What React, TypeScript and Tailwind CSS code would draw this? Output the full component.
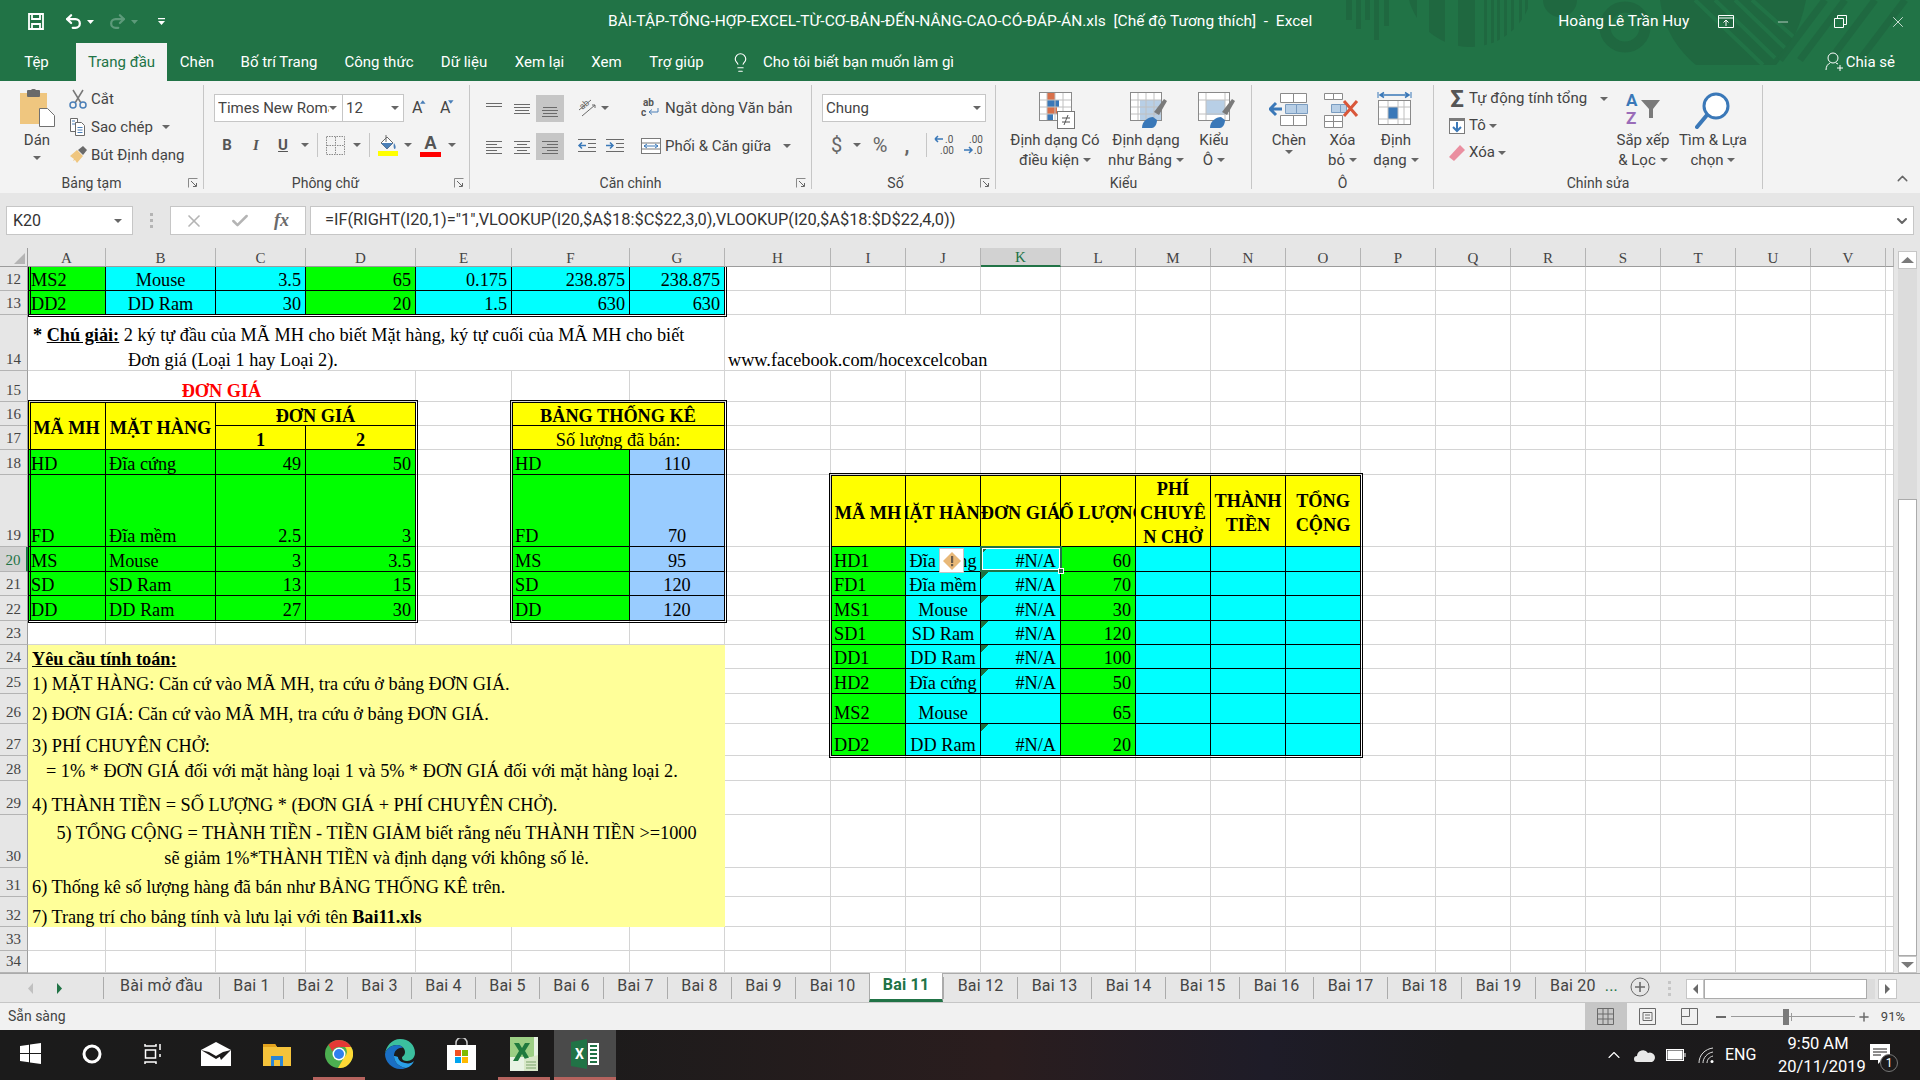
import React from 'react';
import { Redo2, Undo2, Lightbulb, X, Check, Minus, Plus, ChevronUp, ChevronDown } from 'lucide-react';

type Cell = {
  t?: React.ReactNode;
  a?: 'l' | 'c' | 'r';
  f?: 'g' | 'c' | 'y' | 'b' | 'ly' | 't';
  b?: boolean;
  cs?: number;
  rs?: number;
  k?: boolean;
  none?: boolean;
  red?: boolean;
};

const fillCls = {
  g: 'bg-[#00ff00]',
  c: 'bg-[#00ffff]',
  y: 'bg-[#ffff00]',
  b: 'bg-[#99ccff]',
  ly: 'bg-[#ffff99]',
  t: 'bg-[linear-gradient(135deg,#1d6f3f_5px,#00ffff_5px)]',
};
const alignCls = {
  l: 'justify-start pl-[3px]',
  c: 'justify-center text-center',
  r: 'justify-end pr-[4px]',
};

const columns = ['A', 'B', 'C', 'D', 'E', 'F', 'G', 'H', 'I', 'J', 'K', 'L', 'M', 'N', 'O', 'P', 'Q', 'R', 'S', 'T', 'U', 'V', ''];
const rowNums = Array.from({ length: 23 }, (_, i) => i + 12);

const g = (t: React.ReactNode, a: 'l' | 'c' | 'r' = 'l'): Cell => ({ t, a, f: 'g', k: true });
const c = (t?: React.ReactNode, a: 'l' | 'c' | 'r' = 'r'): Cell => ({ t, a, f: 'c', k: true });
const y = (t: React.ReactNode, extra: Partial<Cell> = {}): Cell => ({ t, a: 'c', f: 'y', k: true, b: true, ...extra });
const note = (t: React.ReactNode): Cell => ({ t: <span className="pl-[1px]">{t}</span>, a: 'l', f: 'ly', cs: 7, none: true });

const sheet: Record<string, Cell> = {
  A12: g('MS2'), B12: c('Mouse', 'c'), C12: c('3.5'), D12: g('65', 'r'), E12: c('0.175'), F12: c('238.875'), G12: c('238.875'),
  A13: g('DD2'), B13: c('DD Ram', 'c'), C13: c('30'), D13: g('20', 'r'), E13: c('1.5'), F13: c('630'), G13: c('630'),
  A14: {
    cs: 7,
    t: (
      <div className="-mb-[2px] pl-[2px] leading-[24.500px]">
        <div><b>* <u>Chú giải:</u></b> 2 ký tự đầu của MÃ MH cho biết Mặt hàng, ký tự cuối của MÃ MH cho biết</div>
        <div className="pl-[95px]">Đơn giá (Loại 1 hay Loại 2).</div>
      </div>
    ),
  },
  H14: { t: 'www.facebook.com/hocexcelcoban', cs: 4 },
  A15: { t: 'ĐƠN GIÁ', cs: 4, a: 'c', b: true, red: true },
  A16: y('MÃ MH', { rs: 2 }), B16: y('MẶT HÀNG', { rs: 2 }), C16: y('ĐƠN GIÁ', { cs: 2 }), C17: y('1'), D17: y('2'),
  F16: y('BẢNG THỐNG KÊ', { cs: 2 }), F17: y('Số lượng đã bán:', { cs: 2, b: false }),
  A18: g('HD'), B18: g('Đĩa cứng'), C18: g('49', 'r'), D18: g('50', 'r'), F18: g('HD'), G18: { t: '110', a: 'c', f: 'b', k: true },
  A19: g('FD'), B19: g('Đĩa mềm'), C19: g('2.5', 'r'), D19: g('3', 'r'), F19: g('FD'), G19: { t: '70', a: 'c', f: 'b', k: true },
  A20: g('MS'), B20: g('Mouse'), C20: g('3', 'r'), D20: g('3.5', 'r'), F20: g('MS'), G20: { t: '95', a: 'c', f: 'b', k: true },
  A21: g('SD'), B21: g('SD Ram'), C21: g('13', 'r'), D21: g('15', 'r'), F21: g('SD'), G21: { t: '120', a: 'c', f: 'b', k: true },
  A22: g('DD'), B22: g('DD Ram'), C22: g('27', 'r'), D22: g('30', 'r'), F22: g('DD'), G22: { t: '120', a: 'c', f: 'b', k: true },
  I19: y('MÃ MH'), J19: y('MẶT HÀNG'), K19: y('ĐƠN GIÁ'), L19: y('SỐ LƯỢNG'),
  M19: y(<div className="leading-[24px]">PHÍ<br />CHUYÊ<br />N CHỞ</div>), N19: y(<div className="leading-[24px]">THÀNH<br />TIỀN</div>), O19: y(<div className="leading-[24px]">TỔNG<br />CỘNG</div>),
  A24: note(<b><u>Yêu cầu tính toán:</u></b>),
  A25: note('1) MẶT HÀNG: Căn cứ vào MÃ MH, tra cứu ở bảng ĐƠN GIÁ.'),
  A26: note('2) ĐƠN GIÁ: Căn cứ vào MÃ MH, tra cứu ở bảng ĐƠN GIÁ.'),
  A27: note('3) PHÍ CHUYÊN CHỞ:'),
  A28: note(<span className="pl-[14px]">= 1% * ĐƠN GIÁ đối với mặt hàng loại 1 và 5% * ĐƠN GIÁ đối với mặt hàng loại 2.</span>),
  A29: note('4) THÀNH TIỀN = SỐ LƯỢNG * (ĐƠN GIÁ + PHÍ CHUYÊN CHỞ).'),
  A30: {
    t: (
      <div className="-mb-[2px] text-center leading-[24.500px]">
        <div>5) TỔNG CỘNG = THÀNH TIỀN - TIỀN GIẢM biết rằng nếu THÀNH TIỀN &gt;=1000</div>
        <div>sẽ giảm 1%*THÀNH TIỀN và định dạng với không số lẻ.</div>
      </div>
    ),
    a: 'c',
    f: 'ly',
    cs: 7,
    none: true,
  },
  A31: note('6) Thống kê số lượng hàng đã bán như BẢNG THỐNG KÊ trên.'),
  A32: note(<>7) Trang trí cho bảng tính và lưu lại với tên <b>Bai11.xls</b></>),
};

const rightRows: [number, string, string, string, string][] = [
  [20, 'HD1', 'Đĩa cứng', '#N/A', '60'],
  [21, 'FD1', 'Đĩa mềm', '#N/A', '70'],
  [22, 'MS1', 'Mouse', '#N/A', '30'],
  [23, 'SD1', 'SD Ram', '#N/A', '120'],
  [24, 'DD1', 'DD Ram', '#N/A', '100'],
  [25, 'HD2', 'Đĩa cứng', '#N/A', '50'],
  [26, 'MS2', 'Mouse', '', '65'],
  [27, 'DD2', 'DD Ram', '#N/A', '20'],
];
rightRows.forEach(([r, id, name, price, qty]) => {
  sheet[`I${r}`] = g(id);
  sheet[`J${r}`] = c(name, 'c');
  sheet[`K${r}`] = { t: price, a: 'r', f: price ? 't' : 'c', k: true };
  sheet[`L${r}`] = g(qty, 'r');
  sheet[`M${r}`] = c();
  sheet[`N${r}`] = c();
  sheet[`O${r}`] = c();
});

const place = (col: number, row: number, cs = 1, rs = 1) => ({
  gridColumn: `${col + 2} / span ${cs}`,
  gridRow: `${row - 10} / span ${rs}`,
});

function Sheet() {
  const covered = new Set<string>();
  const nodes: React.ReactNode[] = [];

  columns.forEach((name, i) => {
    const active = name === 'K';
    nodes.push(
      <div
        key={`h${i}`}
        style={{ gridColumn: `${i + 2}`, gridRow: '1' }}
        className={`flex items-center justify-center border-r border-r-[#b4b4b4] border-b pt-[2px] text-[15px] leading-none ${active ? 'bg-[#d2d2d2] border-b-[#217346] border-b-2 text-[#217346]' : 'bg-[#e6e6e6] border-b-[#9c9c9c] text-[#444]'}`}
      >
        {name}
      </div>
    );
  });

  rowNums.forEach(r => {
    const active = r === 20;
    nodes.push(
      <div
        key={`r${r}`}
        style={{ gridColumn: '1', gridRow: `${r - 10}` }}
        className={`flex items-end justify-center border-b border-b-[#b4b4b4] border-r text-[15px] leading-[21px] ${active ? 'bg-[#d2d2d2] border-r-[#217346] border-r-2 text-[#217346]' : 'bg-[#e6e6e6] border-r-[#9c9c9c] text-[#444]'}`}
      >
        {r}
      </div>
    );
    columns.forEach((name, i) => {
      const id = `${name}${r}`;
      if (covered.has(id)) return;
      const cell = sheet[id] || {};
      const cs = cell.cs || 1;
      const rs = cell.rs || 1;
      for (let a = 0; a < cs; a++) {
        for (let b = 0; b < rs; b++) covered.add(`${columns[i + a]}${r + b}`);
      }
      const isHeader = cell.f === 'y';
      nodes.push(
        <div
          key={id}
          style={place(i, r, cs, rs)}
          className={[
            'flex overflow-hidden whitespace-nowrap',
            isHeader ? 'items-center pt-[4px] leading-[20px]' : 'items-end leading-[20px]',
            cell.b ? 'font-bold' : '',
            cell.red ? 'text-[#ff0000]' : 'text-black',
            cell.f ? fillCls[cell.f] : '',
            alignCls[cell.a || 'l'],
            cell.none ? '' : 'border-r border-b',
            cell.k ? 'border-black' : 'border-[#d4d4d4]',
          ].join(' ')}
        >
          {cell.t}
        </div>
      );
    });
  });

  return (
    <div className="grid w-[1894px] shrink-0 grid-cols-[28px_78px_110px_90px_110px_96px_118px_95px_106px_75px_75px_80px_75px_75px_75px_75px_75px_75px_75px_75px_75px_75px_75px_8px] grid-rows-[19px_24px_24px_56px_31px_24px_24px_25px_72px_25px_24px_25px_24px_24px_25px_30px_32px_25px_34px_53px_29px_30px_24px_22px] bg-white font-['Liberation_Serif',serif] text-[18.250px]">
      <div style={{ gridColumn: '1', gridRow: '1' }} className="flex items-end justify-end border-r border-b border-[#9c9c9c] bg-[#e6e6e6] p-[2px]">
        <div className="h-0 w-0 border-l-[11px] border-t-[11px] border-l-transparent border-t-transparent border-b-0 border-r-[11px] border-r-[#b4b4b4]" />
      </div>
      {nodes}
      <div style={place(0, 12, 7, 2)} className="pointer-events-none -mb-[2px] -mr-[2px] border-x-[3px] border-b-[3px] border-double border-black" />
      <div style={place(0, 16, 4, 7)} className="pointer-events-none -mb-[2px] -mr-[2px] -mt-[2px] border-[3px] border-double border-black" />
      <div style={place(5, 16, 2, 7)} className="pointer-events-none -m-[2px] border-[3px] border-double border-black" />
      <div style={place(8, 19, 7, 9)} className="pointer-events-none -m-[2px] border-[3px] border-double border-black" />
      <div style={place(10, 20)} className="pointer-events-none relative -mx-px -mt-px border-2 border-[#217346]">
        <div className="h-full w-full border border-white" />
        <div className="absolute -bottom-[4px] -right-[4px] h-[6px] w-[6px] border border-white bg-[#217346]" />
      </div>
      <div style={place(9, 20)} className="ml-[33px] mt-[1px] flex h-[25px] w-[25px] items-center justify-center self-start border border-[#c4c4c4] bg-white">
        <svg width="20" height="20" viewBox="0 0 20 20">
          <path d="M10 1l9 9-9 9-9-9z" fill="#e8b878" />
          <rect x="9" y="5" width="2.2" height="7" fill="#6a5a4a" />
          <rect x="9" y="13" width="2.2" height="2.2" fill="#6a5a4a" />
        </svg>
      </div>
    </div>
  );
}

const Arrow = ({ className = '' }: { className?: string }) => (
  <svg width="8" height="4" viewBox="0 0 8 4" className={`shrink-0 ${className}`}><path d="M0 0h8L4 4z" fill="#666" /></svg>
);

const Launcher = () => (
  <svg width="10" height="10" viewBox="0 0 10 10" className="absolute bottom-[5px] right-[5px]" fill="none" stroke="#8a8a8a">
    <path d="M.5 9.500v-9h9" />
    <path d="M3 3l5 5M5 8.500h3.500V5" stroke="#666" />
  </svg>
);

function Group({ w, label, labelCls = '', launcher, children }: { w: string; label: string; labelCls?: string; launcher?: boolean; children: React.ReactNode }) {
  return (
    <div className={`flex shrink-0 flex-col ${w}`}>
      <div className="flex min-h-0 flex-1">{children}</div>
      <div className={`relative h-[20px] text-center text-[14px] leading-[20px] text-[#444] ${labelCls}`}>
        {label}
        {launcher && <Launcher />}
      </div>
    </div>
  );
}

const GroupSep = () => <div className="my-[4px] w-px shrink-0 bg-[#c6c6c6]" />;

const AlignIcon = ({ lines }: { lines: [number, number, number][] }) => (
  <svg width="20" height="20" viewBox="0 0 20 20" stroke="#6a6a6a" strokeWidth="1">
    {lines.map(([x1, x2, ly], i) => <path key={i} d={`M${x1} ${ly}.5H${x2}`} />)}
  </svg>
);

const IconBox = ({ hot, children }: { hot?: boolean; children: React.ReactNode }) => (
  <div className={`flex h-[27px] w-[28px] shrink-0 items-center justify-center ${hot ? 'bg-[#c6c6c6]' : ''}`}>{children}</div>
);

const SheetGridIcon = ({ className = '', children }: { className?: string; children: React.ReactNode }) => (
  <svg width="40" height="38" viewBox="0 0 40 38" fill="none" className={className}>{children}</svg>
);

function BigButton({ w, lines, icon }: { w: string; lines: React.ReactNode[]; icon: React.ReactNode }) {
  return (
    <div className={`flex shrink-0 flex-col items-center pt-[10px] ${w}`}>
      <div className="flex h-[38px] items-center justify-center">{icon}</div>
      <div className="mt-[1px] text-center text-[15px] leading-[20px] text-[#444]">
        {lines.map((l, i) => <div key={i} className="flex items-center justify-center gap-[4px] whitespace-nowrap">{l}</div>)}
      </div>
    </div>
  );
}

function Ribbon() {
  const top = <AlignIcon lines={[[2, 18, 5], [2, 18, 8]]} />;
  const mid = <AlignIcon lines={[[2, 18, 6], [2, 18, 9], [3, 17, 12], [2, 18, 15]]} />;
  const bottom = <AlignIcon lines={[[3, 17, 9], [2, 18, 12], [3, 17, 15], [2, 18, 18]]} />;
  const left = <AlignIcon lines={[[2, 18, 5], [2, 13, 8], [2, 18, 11], [2, 13, 14], [2, 18, 17]]} />;
  const center = <AlignIcon lines={[[2, 18, 5], [5, 15, 8], [2, 18, 11], [5, 15, 14], [2, 18, 17]]} />;
  const right = <AlignIcon lines={[[2, 18, 5], [7, 18, 8], [2, 18, 11], [7, 18, 14], [2, 18, 17]]} />;

  return (
    <div className="flex h-[112px] bg-[#f3f3f3] text-[15px] text-[#444]">
      <Group w="w-[203px]" label="Bảng tạm" labelCls="pr-[20px]" launcher>
        <div className="ml-[5px] flex w-[64px] flex-col items-center pt-[8px]">
          <svg width="35" height="38" viewBox="0 0 35 38">
            <rect x="0" y="4" width="27" height="31" fill="#efc67f" />
            <rect x="7" y="1" width="13" height="7" rx="1" fill="#6a6a6a" />
            <rect x="11" y="0" width="5" height="4" rx="1.500" fill="#6a6a6a" />
            <path d="M19.500 19.500h8l7 7v11h-15z" fill="#fff" stroke="#707070" />
          </svg>
          <div className="mt-[2px] leading-[22px]">Dán</div>
          <Arrow className="mt-[5px]" />
        </div>
        <div className="flex flex-col pt-[4px]">
          <div className="flex h-[28px] items-center gap-[4px]">
            <svg width="18" height="20" viewBox="0 0 18 20" fill="none">
              <path d="M4 1l8 13M14 1L6 14" stroke="#777" strokeWidth="1.500" />
              <circle cx="4" cy="16" r="3" stroke="#4a7fb8" strokeWidth="1.500" />
              <circle cx="14" cy="16" r="3" stroke="#4a7fb8" strokeWidth="1.500" />
            </svg>
            Cắt
          </div>
          <div className="flex h-[28px] items-center gap-[4px]">
            <svg width="18" height="20" viewBox="0 0 18 20" fill="#fff" stroke="#6a6a6a">
              <path d="M1.500 1.500h7v13h-7z" />
              <path d="M6.500 5.500h6l3 3v10h-9z" />
              <path d="M3 4h3M3 7h3M8.500 10.500h5M8.500 13h5M8.500 15.500h5" stroke="#4a7fb8" />
            </svg>
            Sao chép
            <Arrow className="ml-[5px]" />
          </div>
          <div className="flex h-[28px] items-center gap-[4px]">
            <svg width="18" height="18" viewBox="0 0 18 18">
              <path d="M1 10l7-6 6 6-6 7-2-3-2 1 1-2z" fill="#efc67f" />
              <path d="M9 4l5-4 4 4-4 5z" fill="#6a6a6a" />
            </svg>
            Bút Định dạng
          </div>
        </div>
      </Group>
      <GroupSep />

      <Group w="w-[265px]" label="Phông chữ" labelCls="pr-[22px]" launcher>
        <div className="flex flex-col pt-[13px]">
          <div className="ml-[10px] flex h-[28px] items-center">
            <div className="flex h-full w-[129px] items-center justify-between overflow-hidden border border-[#c6c6c6] bg-white pl-[3px] pr-[5px] text-[15px]">
              <span className="w-[112px] overflow-hidden whitespace-nowrap">Times New Roman</span>
              <Arrow />
            </div>
            <div className="flex h-full w-[61px] items-center justify-between border border-l-0 border-[#c6c6c6] bg-white pl-[3px] pr-[4px]">
              12 <Arrow />
            </div>
            <div className="ml-[8px] flex w-[14px] items-start text-[16px] leading-none">A<svg width="6" height="4" viewBox="0 0 6 4" className="-ml-[2px]"><path d="M0 4L3 0l3 4z" fill="#4a7fb8" /></svg></div>
            <div className="ml-[14px] flex w-[14px] items-start text-[16px] leading-none">A<svg width="6" height="4" viewBox="0 0 6 4" className="-ml-[2px]"><path d="M0 0l3 4 3-4z" fill="#4a7fb8" /></svg></div>
          </div>
          <div className="mt-[11px] flex h-[24px] items-center pl-[14px]">
            <span className="w-[18px] text-center font-bold text-[#555]">B</span>
            <span className="ml-[10px] w-[20px] text-center font-['Liberation_Serif',serif] font-bold italic text-[#555]">I</span>
            <span className="ml-[7px] w-[20px] text-center font-bold text-[#555] underline">U</span>
            <Arrow className="ml-[8px]" />
            <div className="ml-[8px] h-[24px] w-px bg-[#c6c6c6]" />
            <svg width="19" height="19" viewBox="0 0 19 19" className="ml-[8px]" fill="none" stroke="#8a8a8a" strokeDasharray="1.500 1">
              <rect x=".5" y=".5" width="18" height="18" />
              <path d="M9.500 1v17M1 9.500h17" />
            </svg>
            <Arrow className="ml-[8px]" />
            <div className="ml-[8px] h-[24px] w-px bg-[#c6c6c6]" />
            <svg width="20" height="22" viewBox="0 0 20 22" className="ml-[8px]">
              <path d="M3 9l6-6 6 6-6 6z" fill="#fff" stroke="#6a6a6a" />
              <path d="M8 1v7" stroke="#6a6a6a" />
              <path d="M3 9h12l-6 6z" fill="#4a7fb8" />
              <path d="M16 9c2 3 2 5 1 6-1 0-2-2-1-6z" fill="#4a7fb8" />
              <rect x="0" y="17" width="20" height="5" fill="#ffff00" />
            </svg>
            <Arrow className="ml-[6px]" />
            <div className="ml-[8px] flex w-[21px] flex-col items-center font-['Liberation_Sans',sans-serif] text-[18px] font-bold leading-[18px] text-[#555]">
              A
              <div className="h-[5px] w-full bg-[#ff0000]" />
            </div>
            <Arrow className="ml-[7px]" />
          </div>
        </div>
      </Group>
      <GroupSep />

      <Group w="w-[341px]" label="Căn chỉnh" labelCls="pr-[20px]" launcher>
        <div className="flex flex-col pt-[13px]">
          <div className="ml-[10px] flex h-[28px] items-center">
            <IconBox>{top}</IconBox>
            <IconBox>{mid}</IconBox>
            <IconBox hot>{bottom}</IconBox>
            <div className="ml-[9px] flex w-[28px] justify-center">
              <svg width="22" height="22" viewBox="0 0 22 22" fill="none" stroke="#6a6a6a">
                <path d="M3 13L15 3M6 19l13-11M16 8l3 0 0 3" />
                <text x="4" y="11" fontSize="9" fill="#6a6a6a" stroke="none" transform="rotate(-40 8 9)">ab</text>
              </svg>
            </div>
            <Arrow />
            <div className="ml-[32px] flex items-center gap-[4px] whitespace-nowrap">
              <svg width="20" height="22" viewBox="0 0 20 22">
                <text x="2" y="9" fontSize="10" fontWeight="700" fill="#555">ab</text>
                <text x="0" y="19" fontSize="10" fontWeight="700" fill="#555">c</text>
                <path d="M8 15h9v-4M8 15l3-2.500M8 15l3 2.500" fill="none" stroke="#4a7fb8" />
              </svg>
              Ngắt dòng Văn bản
            </div>
          </div>
          <div className="ml-[10px] mt-[10px] flex h-[28px] items-center">
            <IconBox>{left}</IconBox>
            <IconBox>{center}</IconBox>
            <IconBox hot>{right}</IconBox>
            <div className="ml-[9px] flex w-[28px] justify-center">
              <svg width="20" height="20" viewBox="0 0 20 20" fill="none" stroke="#6a6a6a"><path d="M1 3.500h18M11 7.500h8M11 11.500h8M1 15.500h18" /><path d="M9 9.500H2M5 6.500l-3 3 3 3" stroke="#3a78b8" strokeWidth="1.500" /></svg>
            </div>
            <div className="flex w-[28px] justify-center">
              <svg width="20" height="20" viewBox="0 0 20 20" fill="none" stroke="#6a6a6a"><path d="M1 3.500h18M11 7.500h8M11 11.500h8M1 15.500h18" /><path d="M1 9.500h7M5 6.500l3 3-3 3" stroke="#3a78b8" strokeWidth="1.500" /></svg>
            </div>
            <div className="ml-[12px] flex items-center gap-[4px] whitespace-nowrap">
              <svg width="20" height="20" viewBox="0 0 20 20" fill="none" stroke="#7a7a7a">
                <rect x=".5" y="2.500" width="19" height="15" fill="#fff" />
                <path d="M1 7h18M1 13h18" />
                <path d="M3 10h14M6 8l-3 2 3 2M14 8l3 2-3 2" stroke="#3a78b8" fill="#fff" />
              </svg>
              Phối &amp; Căn giữa
              <Arrow className="ml-[8px]" />
            </div>
          </div>
        </div>
      </Group>
      <GroupSep />

      <Group w="w-[183px]" label="Số" labelCls="pr-[16px]" launcher>
        <div className="flex flex-col pt-[13px]">
          <div className="ml-[10px] flex h-[28px] w-[164px] items-center justify-between border border-[#c6c6c6] bg-white pl-[3px] pr-[4px]">
            Chung <Arrow />
          </div>
          <div className="mt-[11px] flex h-[24px] items-center pl-[19px] text-[#666]">
            <span className="w-[10px] text-center text-[20px]">$</span>
            <Arrow className="ml-[12px]" />
            <span className="ml-[8px] w-[22px] text-center text-[20px] leading-none">%</span>
            <span className="ml-[9px] w-[14px] text-center text-[20px] font-bold leading-none">,</span>
            <div className="ml-[12px] h-[24px] w-px bg-[#c6c6c6]" />
            <svg width="22" height="22" viewBox="0 0 22 22" className="ml-[7px]" fontSize="10" fill="#555">
              <text x="11" y="9">.0</text>
              <text x="6" y="20">.00</text>
              <path d="M1 5h8M1 5l3-3M1 5l3 3" stroke="#3a78b8" strokeWidth="1.500" fill="none" />
            </svg>
            <svg width="22" height="22" viewBox="0 0 22 22" className="ml-[7px]" fontSize="10" fill="#555">
              <text x="6" y="9">.00</text>
              <text x="11" y="20">.0</text>
              <path d="M1 16h8M6 13l3 3-3 3" stroke="#3a78b8" strokeWidth="1.500" fill="none" />
            </svg>
          </div>
        </div>
      </Group>
      <GroupSep />

      <Group w="w-[255px]" label="Kiểu">
        <div className="flex pl-[12px]">
          <BigButton
            w="w-[94px]"
            lines={['Định dạng Có', <>điều kiện <Arrow /></>]}
            icon={
              <SheetGridIcon className="ml-[4px]">
                <rect x="2.500" y="1.500" width="32" height="28" fill="#fff" stroke="#8a8a8a" />
                <rect x="10" y="2" width="8" height="7" fill="#d9704a" />
                <rect x="10" y="9" width="12" height="7" fill="#3a78b8" />
                <rect x="10" y="16" width="10" height="7" fill="#d9704a" />
                <rect x="10" y="23" width="6" height="6" fill="#3a78b8" />
                <path d="M3 9h31M3 16h31M3 23h31M10 2v27M18 2v27M26 2v27" stroke="#c0c0c0" />
                <rect x="20.500" y="20.500" width="17" height="17" fill="#fff" stroke="#777" />
                <path d="M25 27h8M25 31h8M31 24l-4 10" stroke="#555" fill="none" />
              </SheetGridIcon>
            }
          />
          <BigButton
            w="w-[88px]"
            lines={['Định dạng', <>như Bảng <Arrow /></>]}
            icon={
              <SheetGridIcon className="ml-[4px]">
                <rect x="2.500" y="1.500" width="31" height="28" fill="#fff" stroke="#8a8a8a" />
                <rect x="12" y="9" width="21" height="20" fill="#b8cfe6" />
                <path d="M3 9h30M3 16h30M3 23h30M10 2v27M18 2v27M26 2v27" stroke="#c0c0c0" />
                <path d="M26 21L36 8l3 2-8 14z" fill="#7a7a7a" />
                <path d="M14 37c0-7 6-11 11-11l4 3c0 5-3 8-5 8z" fill="#3a78b8" />
              </SheetGridIcon>
            }
          />
          <BigButton
            w="w-[48px]"
            lines={['Kiểu', <>Ô <Arrow /></>]}
            icon={
              <SheetGridIcon className="ml-[4px]">
                <rect x="2.500" y="1.500" width="31" height="28" fill="#fff" stroke="#8a8a8a" />
                <rect x="10" y="9" width="19" height="15" fill="#b8cfe6" />
                <path d="M3 9h30M3 23h30M10 2v27M29 2v27" stroke="#c0c0c0" />
                <path d="M26 21L36 8l3 2-8 14z" fill="#7a7a7a" />
                <path d="M14 37c0-7 6-11 11-11l4 3c0 5-3 8-5 8z" fill="#3a78b8" />
              </SheetGridIcon>
            }
          />
        </div>
      </Group>
      <GroupSep />

      <Group w="w-[181px]" label="Ô">
        <div className="flex pl-[10px]">
          <BigButton
            w="w-[54px]"
            lines={['Chèn', <Arrow />]}
            icon={
              <SheetGridIcon>
                <path d="M11.500 2.500h13v9h-13zM24.500 2.500h13v9h-13zM11.500 24.500h13v10h-13zM24.500 24.500h13v10h-13z" stroke="#8a8a8a" fill="#fff" />
                <path d="M16.500 13.500h11v9h-11zM27.500 13.500h11v9h-11z" stroke="#7a9cc0" fill="#b8cfe6" />
                <path d="M1 18h12M7 12l-6 6 6 6" stroke="#3a78b8" strokeWidth="3" />
              </SheetGridIcon>
            }
          />
          <BigButton
            w="w-[53px]"
            lines={['Xóa', <>bỏ <Arrow /></>]}
            icon={
              <SheetGridIcon>
                <path d="M1.500 2.500h9v6h-9zM10.500 2.500h9v6h-9zM1.500 24.500h9v6h-9zM10.500 24.500h9v6h-9zM1.500 30.500h9v6h-9zM10.500 30.500h9v6h-9z" stroke="#8a8a8a" fill="#fff" />
                <path d="M8.500 13.500h9v8h-9zM17.500 13.500h6v8h-6z" stroke="#7a9cc0" fill="#b8cfe6" />
                <path d="M21 10l13 15M34 10L21 25" stroke="#d9573a" strokeWidth="3" />
              </SheetGridIcon>
            }
          />
          <BigButton
            w="w-[54px]"
            lines={['Định', <>dạng <Arrow /></>]}
            icon={
              <SheetGridIcon>
                <path d="M2 1v6M35 1v6" stroke="#3a78b8" />
                <path d="M4 4h29M8 1.500L4 4l4 2.500M29 1.500L33 4l-4 2.500" stroke="#3a78b8" strokeWidth="1.500" />
                <rect x="2.500" y="9.500" width="32" height="24" fill="#fff" stroke="#8a8a8a" />
                <rect x="12" y="16" width="10" height="12" fill="#3a78b8" />
                <path d="M3 16h31M3 28h31M12 10v23M22 10v23M28 10v23" stroke="#c0c0c0" />
              </SheetGridIcon>
            }
          />
        </div>
      </Group>
      <GroupSep />

      <Group w="w-[328px]" label="Chỉnh sửa">
        <div className="flex">
          <div className="flex w-[176px] flex-col pt-[4px] pl-[14px]">
            <div className="flex h-[27px] items-center gap-[3px] whitespace-nowrap">
              <span className="w-[18px] text-center text-[24px] font-bold leading-none text-[#555]">Σ</span>
              Tự động tính tổng
              <Arrow className="ml-[10px]" />
            </div>
            <div className="flex h-[27px] items-center gap-[3px]">
              <svg width="18" height="18" viewBox="0 0 18 18" fill="none">
                <rect x="1.500" y="1.500" width="15" height="15" fill="#fff" stroke="#7a7a7a" />
                <path d="M2 3h14" stroke="#7a7a7a" strokeWidth="2" />
                <path d="M9 5v9M5 10l4 4 4-4" stroke="#3a78b8" strokeWidth="2" />
              </svg>
              Tô <Arrow />
            </div>
            <div className="flex h-[27px] items-center gap-[3px]">
              <svg width="18" height="18" viewBox="0 0 18 18"><path d="M1 13L12 1l5 5-11 11z" fill="#ea8fa0" /></svg>
              Xóa <Arrow />
            </div>
          </div>
          <BigButton
            w="w-[66px]"
            lines={['Sắp xếp', <>&amp; Lọc <Arrow /></>]}
            icon={
              <svg width="36" height="38" viewBox="0 0 36 38">
                <text x="1" y="15" fontSize="17" fontWeight="700" fill="#3a78b8">A</text>
                <text x="1" y="33" fontSize="17" fontWeight="700" fill="#9a6cb8">Z</text>
                <path d="M16 9h19l-7 9v9h-4v-9z" fill="#7a7a7a" />
              </svg>
            }
          />
          <BigButton
            w="w-[74px]"
            lines={['Tìm & Lựa', <>chọn <Arrow /></>]}
            icon={
              <svg width="36" height="38" viewBox="0 0 36 38" fill="none">
                <circle cx="21" cy="15" r="12" fill="#fff" stroke="#3a78b8" strokeWidth="3" />
                <path d="M12 24L2 36" stroke="#3a78b8" strokeWidth="4" strokeLinecap="round" />
              </svg>
            }
          />
        </div>
      </Group>
      <GroupSep />
      <div className="flex flex-1 items-end justify-end pb-[6px] pr-[9px]">
        <ChevronUp size={17} color="#666" />
      </div>
    </div>
  );
}

function TitleArt() {
  return (
    <svg width="580" height="81" viewBox="1340 0 580 81" className="absolute right-0 top-0" fill="#1f6840">
      <defs>
        <clipPath id="arc"><circle cx="1470" cy="-16" r="63" /></clipPath>
        <clipPath id="big"><path d="M1660 0h146c-6 30-18 50-30 65h-80c-18-15-32-35-36-65z" /></clipPath>
      </defs>
      <path d="M1346 0h6v20h-6zM1356 0h5v29h-5zM1365 0h5v20h-5zM1374 0h5v40h-5zM1384 0h5v26h-5z" />
      <g clipPath="url(#arc)">
        <path d="M1407 0h10v20h-10zM1429 0h16v60h-16zM1458 0h17v60h-17zM1484 0h3v60h-3zM1491 0h3v60h-3zM1497 0h3v60h-3zM1504 0h3v60h-3zM1511 0h3v60h-3zM1519 0h3v60h-3zM1525 0h3v60h-3z" />
      </g>
      <circle cx="1560" cy="0" r="17" />
      <circle cx="1625" cy="27" r="20" fill="none" stroke="#1f6840" strokeWidth="11" />
      <g clipPath="url(#big)">
        <rect x="1660" y="0" width="150" height="70" />
        <path d="M1695 0l68 65M1715 0l60 58M1735 0l50 48M1752 0l45 40" stroke="#217346" strokeWidth="4" />
      </g>
      <path d="M1825 0l-45 60M1845 0l-45 60M1875 0l-45 60M1905 0l-50 66" stroke="#1f6840" strokeWidth="7" fill="none" opacity="0.9" />
    </svg>
  );
}

function TitleBar() {
  return (
    <div className="relative h-[81px] bg-[#217346] text-white">
      <TitleArt />
      <div className="relative flex h-[43px] items-center text-[15.500px]">
        <div className="ml-[28px] flex w-[580px] shrink-0 items-center">
          <svg width="16" height="17" viewBox="0 0 16 17" fill="none" stroke="#fff" strokeWidth="1.800">
            <path d="M1 1h14v15H1z" />
            <path d="M4 1v5h8V1M4 16v-5h8v5" />
          </svg>
          <Undo2 size={19} strokeWidth={2.800} className="ml-[20px]" />
          <svg width="7" height="4" viewBox="0 0 7 4" className="ml-[4px]"><path d="M0 0h7L3.500 4z" fill="#fff" /></svg>
          <Redo2 size={19} strokeWidth={2.800} className="ml-[14px] text-[#5d9a7a]" />
          <svg width="7" height="4" viewBox="0 0 7 4" className="ml-[4px]"><path d="M0 0h7L3.500 4z" fill="#5d9a7a" /></svg>
          <svg width="7" height="8" viewBox="0 0 7 8" className="ml-[20px]"><path d="M0 0h7v1.200H0zM0 3h7L3.500 7z" fill="#fff" /></svg>
        </div>
        <div className="whitespace-pre">BÀI-TẬP-TỔNG-HỢP-EXCEL-TỪ-CƠ-BẢN-ĐẾN-NÂNG-CAO-CÓ-ĐÁP-ÁN.xls  [Chế độ Tương thích]  -  Excel</div>
        <div className="ml-[246px] whitespace-nowrap">Hoàng Lê Trần Huy</div>
        <svg width="16" height="13" viewBox="0 0 16 13" className="ml-[29px]" fill="none" stroke="#fff">
          <path d="M.5.5h15v12H.5zM1 3h14M8 11V5M5.500 7.500L8 5l2.500 2.500" />
        </svg>
        <Minus size={16} strokeWidth={1} className="ml-[41px]" />
        <svg width="13" height="13" viewBox="0 0 13 13" className="ml-[43px]" fill="none" stroke="#fff"><path d="M.5 3.500h9v9h-9zM3.500 3.500v-3h9v9h-3" /></svg>
        <X size={18} strokeWidth={1} className="ml-[42px]" />
      </div>
      <div className="relative flex h-[38px] items-stretch text-[15px]">
        <div className="flex w-[76px] items-center justify-center pr-[3px]">Tệp</div>
        <div className="flex w-[91px] items-center justify-center bg-[#f3f3f3] text-[#217346]">Trang đầu</div>
        <div className="flex w-[60px] items-center justify-center">Chèn</div>
        <div className="flex w-[104px] items-center justify-center">Bố trí Trang</div>
        <div className="flex w-[96px] items-center justify-center">Công thức</div>
        <div className="flex w-[74px] items-center justify-center">Dữ liệu</div>
        <div className="flex w-[77px] items-center justify-center">Xem lại</div>
        <div className="flex w-[57px] items-center justify-center">Xem</div>
        <div className="flex w-[83px] items-center justify-center">Trợ giúp</div>
        <div className="flex w-[45px] items-center justify-center"><Lightbulb size={21} strokeWidth={1.300} /></div>
        <div className="flex items-center whitespace-nowrap">Cho tôi biết bạn muốn làm gì</div>
        <div className="ml-auto flex items-center gap-[3px] pr-[25px]">
          <svg width="18" height="20" viewBox="0 0 18 20" fill="none" stroke="#fff">
            <circle cx="8" cy="6" r="5" />
            <path d="M1 18c0-4 2-6 4-7M11 11l2 1M12 16h6M15 13v6" />
          </svg>
          Chia sẻ
        </div>
      </div>
    </div>
  );
}

function FormulaBar() {
  return (
    <div className="flex h-[55px] items-start bg-[#e6e6e6] pt-[13px] text-[16px] text-[#333]">
      <div className="ml-[6px] flex h-[29px] w-[127px] items-center justify-between border border-[#c6c6c6] bg-white pl-[6px] pr-[10px]">
        K20 <Arrow />
      </div>
      <div className="flex h-[29px] w-[37px] flex-col items-center justify-center gap-[3px]">
        <div className="h-[3px] w-[3px] bg-[#b4b4b4]" />
        <div className="h-[3px] w-[3px] bg-[#b4b4b4]" />
        <div className="h-[3px] w-[3px] bg-[#b4b4b4]" />
      </div>
      <div className="flex h-[29px] w-[136px] items-center border border-[#c6c6c6] bg-white">
        <X size={20} strokeWidth={2} className="ml-[13px] text-[#b4b4b4]" />
        <Check size={20} strokeWidth={3} className="ml-[26px] text-[#b4b4b4]" />
        <span className="ml-[24px] font-['Liberation_Serif',serif] text-[18px] font-bold italic text-[#6a6a6a]">fx</span>
      </div>
      <div className="ml-[4px] flex h-[29px] flex-1 items-center justify-between border border-[#c6c6c6] bg-white pl-[14px] pr-[3px]">
        <span className="whitespace-nowrap text-[16.400px]">=IF(RIGHT(I20,1)="1",VLOOKUP(I20,$A$18:$C$22,3,0),VLOOKUP(I20,$A$18:$D$22,4,0))</span>
        <ChevronDown size={16} strokeWidth={3} className="text-[#666]" />
      </div>
      <div className="w-[6px]" />
    </div>
  );
}

function VScroll() {
  return (
    <div className="flex w-[26px] flex-col bg-[#e6e6e6] pl-[4px] pr-[3px] pt-[3px]">
      <div className="flex h-[18px] items-center justify-center border border-[#c6c6c6] bg-white">
        <svg width="13" height="6" viewBox="0 0 13 6"><path d="M0 6h13L6.500 0z" fill="#7a7a7a" /></svg>
      </div>
      <div className="flex flex-1 flex-col bg-[#dcdcdc] pt-[230px]">
        <div className="h-[457px] border border-[#ababab] bg-white" />
      </div>
      <div className="flex h-[17px] items-center justify-center border border-[#c6c6c6] bg-white">
        <svg width="13" height="6" viewBox="0 0 13 6"><path d="M0 0h13L6.500 6z" fill="#7a7a7a" /></svg>
      </div>
    </div>
  );
}

const tabs: [string, string][] = [
  ['Bài mở đầu', 'w-[116px]'], ['Bai 1', 'w-[64px]'], ['Bai 2', 'w-[64px]'], ['Bai 3', 'w-[64px]'], ['Bai 4', 'w-[64px]'],
  ['Bai 5', 'w-[64px]'], ['Bai 6', 'w-[64px]'], ['Bai 7', 'w-[64px]'], ['Bai 8', 'w-[64px]'], ['Bai 9', 'w-[64px]'], ['Bai 10', 'w-[74px]'],
  ['Bai 11', 'w-[74px]'], ['Bai 12', 'w-[74px]'], ['Bai 13', 'w-[74px]'], ['Bai 14', 'w-[74px]'], ['Bai 15', 'w-[74px]'], ['Bai 16', 'w-[74px]'],
  ['Bai 17', 'w-[74px]'], ['Bai 18', 'w-[74px]'], ['Bai 19', 'w-[74px]'],
];

function TabBar() {
  return (
    <div className="flex h-[29px] border-t border-[#ababab] bg-[#e6e6e6] text-[16px] tracking-[0.2px] text-[#444]">
      <div className="flex w-[103px] shrink-0 items-center pl-[28px]">
        <svg width="5" height="11" viewBox="0 0 5 11"><path d="M5 0v11L0 5.500z" fill="#c0c0c0" /></svg>
        <svg width="5" height="11" viewBox="0 0 5 11" className="ml-[24px]"><path d="M0 0v11l5-5.500z" fill="#217346" /></svg>
      </div>
      {tabs.map(([name, w]) =>
        name === 'Bai 11' ? (
          <div key={name} className={`-mt-px flex shrink-0 items-center justify-center border-x border-[#ababab] border-b-[3px] border-b-[#217346] bg-white pb-[2px] font-bold text-[#217346] ${w}`}>
            {name}
          </div>
        ) : (
          <div key={name} className={`my-[3px] flex shrink-0 items-center justify-center whitespace-nowrap border-l border-[#ababab] pb-[4px] ${w}`}>
            {name}
          </div>
        )
      )}
      <div className="my-[3px] flex w-[95px] shrink-0 items-center whitespace-nowrap border-l border-[#ababab] pb-[4px] pl-[14px]">
        <span>Bai 20</span>
        <span className="ml-[9px] text-[#217346]">...</span>
      </div>
      <svg width="20" height="20" viewBox="0 0 20 20" className="mt-[3px] shrink-0" fill="none" stroke="#6a6a6a">
        <circle cx="10" cy="10" r="9" />
        <path d="M10 5v10M5 10h10" strokeWidth="1.600" />
      </svg>
      <div className="ml-[18px] flex flex-col justify-center gap-[3px]">
        <div className="h-[3px] w-[3px] bg-[#c6c6c6]" />
        <div className="h-[3px] w-[3px] bg-[#c6c6c6]" />
        <div className="h-[3px] w-[3px] bg-[#c6c6c6]" />
      </div>
      <div className="ml-[15px] mt-[5px] flex h-[20px] w-[211px] shrink-0">
        <div className="flex w-[18px] items-center justify-center border border-[#c6c6c6] bg-white">
          <svg width="5" height="10" viewBox="0 0 5 10"><path d="M5 0v10L0 5z" fill="#6a6a6a" /></svg>
        </div>
        <div className="w-[163px] border border-[#ababab] bg-white" />
        <div className="w-[8px] bg-[#dcdcdc]" />
        <div className="ml-[3px] flex w-[19px] items-center justify-center border border-[#c6c6c6] bg-white">
          <svg width="5" height="10" viewBox="0 0 5 10"><path d="M0 0v10l5-5z" fill="#6a6a6a" /></svg>
        </div>
      </div>
    </div>
  );
}

function StatusBar() {
  return (
    <div className="flex h-[28px] items-center border-t border-[#c6c6c6] bg-[#f1f1f1] pl-[8px] text-[14px] text-[#444]">
      <span>Sẵn sàng</span>
      <div className="ml-auto flex h-full items-center">
        <div className="flex h-full w-[42px] items-center justify-center bg-[#c6c6c6]">
          <svg width="17" height="17" viewBox="0 0 17 17" fill="none" stroke="#6a6a6a"><path d="M.5.5h16v16H.5zM.5 6h16M.5 11h16M6 .5v16M11 .5v16" /></svg>
        </div>
        <svg width="17" height="17" viewBox="0 0 17 17" className="ml-[12px]" fill="none" stroke="#6a6a6a"><path d="M.5.5h16v16H.5zM4 4.500h9v8H4zM6 7h5M6 10h5" /></svg>
        <svg width="17" height="17" viewBox="0 0 17 17" className="ml-[25px]" fill="none" stroke="#6a6a6a"><path d="M.5.5h16v16H.5zM8.500.5v8h-8" /></svg>
        <div className="ml-[18px] h-[2px] w-[10px] bg-[#6a6a6a]" />
        <div className="ml-[5px] flex h-[1px] w-[124px] items-center bg-[#9a9a9a]">
          <div className="ml-[52px] h-[16px] w-[6px] bg-[#7a7a7a]" />
          <div className="ml-[2px] h-[8px] w-px bg-[#9a9a9a]" />
        </div>
        <Plus size={14} strokeWidth={2.500} className="ml-[2px] text-[#6a6a6a]" />
        <span className="ml-[10px] mr-[15px] text-[13px]">91%</span>
      </div>
    </div>
  );
}

const TaskItem = ({ bar, active, children }: { bar?: boolean; active?: boolean; children: React.ReactNode }) => (
  <div className={`flex h-[50px] w-[61.600px] shrink-0 flex-col items-center justify-between ${active ? 'bg-[#4a4a4a]' : ''}`}>
    <div className="flex flex-1 items-center justify-center">{children}</div>
    <div className={`h-[3px] ${active ? 'w-full' : 'w-[52px]'} ${bar ? 'bg-[#b5635e]' : ''}`} />
  </div>
);

function Taskbar() {
  return (
    <div className="flex h-[50px] items-center bg-[linear-gradient(90deg,#1b1b1b_0%,#1c1b1b_30%,#2a1d1e_52%,#1e1c28_66%,#1b1a1d_76%,#1c1a1a_100%)] text-white">
      <TaskItem>
        <svg width="21" height="21" viewBox="0 0 21 21" fill="#fff"><path d="M0 3l9-1.300V10H0zM10 1.500L21 0v10H10zM0 11h9v8.300L0 18zM10 11h11v10l-11-1.500z" /></svg>
      </TaskItem>
      <TaskItem>
        <svg width="20" height="20" viewBox="0 0 20 20" fill="none"><circle cx="10" cy="10" r="8" stroke="#fff" strokeWidth="3" /></svg>
      </TaskItem>
      <TaskItem>
        <svg width="21" height="24" viewBox="0 0 21 24" fill="none" stroke="#fff" strokeWidth="1.500"><path d="M2 2v2h11V2M2 22v-2h11v2M2.500 8h10v8h-10zM17 2v6M17 12v3" /></svg>
      </TaskItem>
      <TaskItem>
        <svg width="30" height="24" viewBox="0 0 30 24"><path d="M0 8L15 0l15 8v16H0z" fill="#fff" /><path d="M0 8l15 9 15-9-8 2-7 4-7-4z" fill="#1c1a1a" /><path d="M30 8L18 13l2 5z" fill="#1c1a1a" /></svg>
      </TaskItem>
      <TaskItem>
        <svg width="28" height="24" viewBox="0 0 28 24"><path d="M0 2h12l2 3h14v19H0z" fill="#f5c33b" /><path d="M0 2h12l2 3H0z" fill="#e2a21d" /><path d="M8 14h12v10h-3v-6h-6v6H8z" fill="#2b86d6" /></svg>
      </TaskItem>
      <TaskItem bar>
        <svg width="28" height="28" viewBox="0 0 28 28">
          <circle cx="14" cy="14" r="14" fill="#4caf50" />
          <path d="M14 0a14 14 0 0 1 12.100 7H14a7 7 0 0 0-6.500 4.400L3.500 4.800A14 14 0 0 1 14 0z" fill="#e53935" />
          <path d="M26.100 7A14 14 0 0 1 13 28l6-10.500A7 7 0 0 0 20 7z" fill="#fdd835" />
          <circle cx="14" cy="14" r="6.500" fill="#fff" />
          <circle cx="14" cy="14" r="5" fill="#2f80ed" />
        </svg>
      </TaskItem>
      <TaskItem>
        <svg width="30" height="30" viewBox="0 0 30 30">
          <path d="M15 0c9 0 15 6 15 14 0 5-4 8-8 8-3 0-5-1-5-3 0-2 3-2 3-6 0-4-4-7-8-7-6 0-11 4-12 9C1 7 7 0 15 0z" fill="#3bbf9e" />
          <path d="M0 15c1-5 6-9 12-9 3 0 5 1 6 3-5-1-9 3-9 8 0 6 5 11 12 12-2 1-4 1-6 1C7 30 0 23 0 15z" fill="#1a6fc4" />
          <path d="M9 17c0 6 5 11 12 12 4-1 7-4 8-7-2 2-5 3-9 2-5-1-7-4-7-6-2-1-3-1-4-1z" fill="#2aa0e8" />
        </svg>
      </TaskItem>
      <TaskItem>
        <svg width="29" height="32" viewBox="0 0 29 32">
          <path d="M9 8V5a5.500 5.500 0 0 1 11 0v3" fill="none" stroke="#ccc" strokeWidth="1.500" />
          <rect y="7" width="29" height="25" fill="#fff" />
          <rect x="8" y="12" width="6" height="6" fill="#f25022" />
          <rect x="15" y="12" width="6" height="6" fill="#7fba00" />
          <rect x="8" y="19" width="6" height="6" fill="#00a4ef" />
          <rect x="15" y="19" width="6" height="6" fill="#ffb900" />
        </svg>
      </TaskItem>
      <TaskItem bar>
        <svg width="28" height="34" viewBox="0 0 28 34">
          <rect width="28" height="34" fill="#e8f3e4" />
          <path d="M0 0h24v20H0z" fill="#9ccf84" />
          <path d="M4 6h5l3 5 3-5h5l-5 8 6 10h-5l-4-7-4 7H3l6-10z" fill="#1f7a3e" />
          <path d="M14 22l14-4v16H14z" fill="#d8e8c8" />
          <path d="M16 25h10M16 28h10M16 31h10" stroke="#7aa36a" />
        </svg>
      </TaskItem>
      <TaskItem bar active>
        <svg width="28" height="30" viewBox="0 0 28 30">
          <path d="M0 3l16-3v30L0 27z" fill="#217346" />
          <text x="4" y="20" fontSize="14" fontWeight="700" fill="#fff">X</text>
          <rect x="17" y="4" width="11" height="22" fill="#fff" />
          <path d="M19 7h7M19 11h7M19 15h7M19 19h7M19 23h7" stroke="#217346" strokeWidth="2" />
        </svg>
      </TaskItem>

      <div className="ml-auto flex h-full items-center pr-[28px] text-[15px]">
        <ChevronUp size={20} strokeWidth={1.300} />
        <svg width="21" height="14" viewBox="0 0 21 14" className="ml-[10px]" fill="#e8e8e8"><path d="M3 14a3 3 0 0 1 0-6 6 6 0 0 1 11-3 4.500 4.500 0 0 1 4 9z" /></svg>
        <svg width="20" height="12" viewBox="0 0 20 12" className="ml-[11px]" fill="none" stroke="#fff"><rect x=".5" y=".5" width="17" height="11" /><rect x="2" y="2" width="14" height="8" fill="#fff" /><path d="M19 4v4" /></svg>
        <svg width="17" height="17" viewBox="0 0 17 17" className="ml-[12px]" fill="none" stroke="#ddd">
          <path d="M1 16c0-8 6-14 14-15M5 16c0-5 4-10 10-11M9 16c0-3 2-6 6-7" />
          <circle cx="14" cy="14.500" r="1.500" fill="#fff" stroke="none" />
        </svg>
        <span className="ml-[10px] w-[36px] text-[16px]">ENG</span>
        <div className="ml-[17px] w-[80px] whitespace-nowrap text-center text-[16.500px] leading-[23px]">
          <div>9:50 AM</div>
          <div>20/11/2019</div>
        </div>
        <div className="relative ml-[12px] h-[22px] w-[22px]">
          <svg width="20" height="20" viewBox="0 0 20 20"><path d="M0 0h20v16h-8l-4 4v-4H0z" fill="#fff" /><path d="M3 5h14M3 8h14M3 11h8" stroke="#1c1a1a" /></svg>
          <div className="absolute -bottom-[6px] -right-[6px] flex h-[18px] w-[18px] items-center justify-center rounded-full border border-[#777] bg-[#1c1a1a] text-[12px]">1</div>
        </div>
      </div>
    </div>
  );
}

export default function App() {
  return (
    <div className="flex h-[1080px] w-[1920px] flex-col overflow-hidden bg-white font-['Roboto',sans-serif]">
      <TitleBar />
      <Ribbon />
      <FormulaBar />
      <div className="flex h-[725px]">
        <Sheet />
        <VScroll />
      </div>
      <TabBar />
      <StatusBar />
      <Taskbar />
    </div>
  );
}
